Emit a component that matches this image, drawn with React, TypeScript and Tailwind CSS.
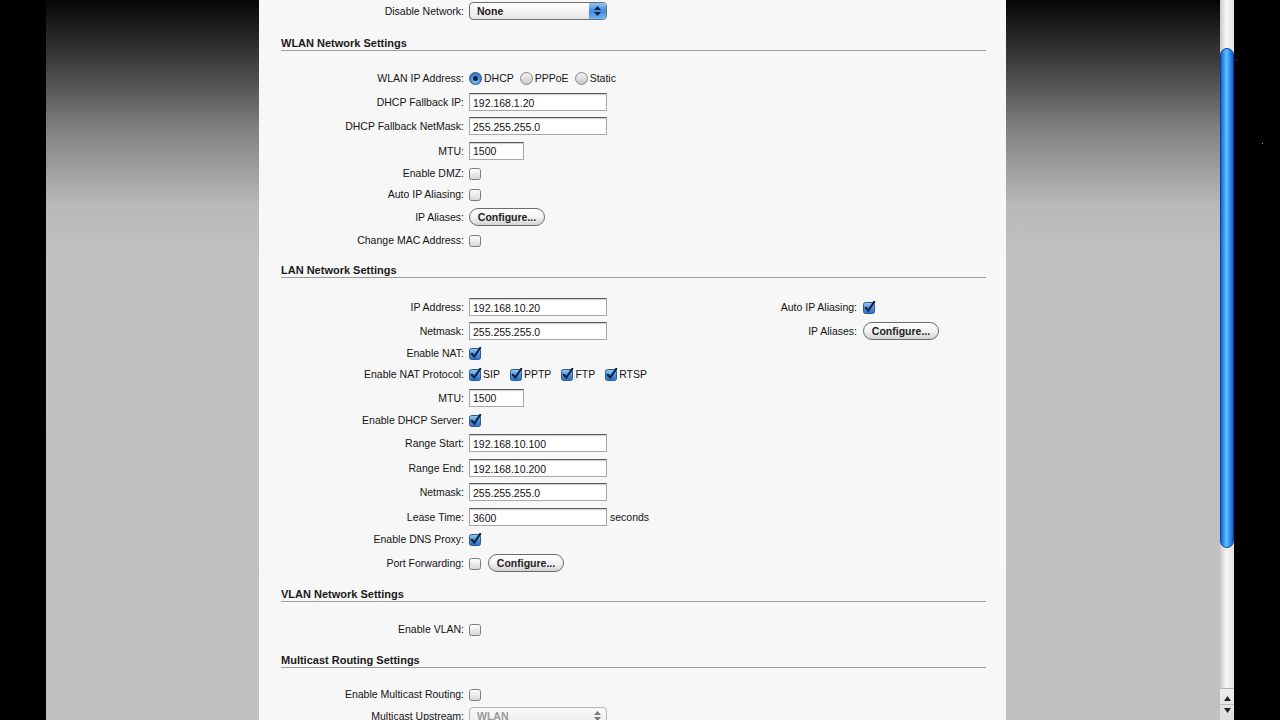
import type { ReactNode } from "react";

const FONT = "font-['Liberation_Sans',Arial,Helvetica,sans-serif]";

function Row({ h, label, children }: { h: string; label: string; children?: ReactNode }) {
  return (
    <div className={`flex items-center ${h}`}>
      <div className="w-[183px] shrink-0 pt-[2px] text-right text-[10.5px] text-[#141414]">{label}</div>
      <div className="ml-[5px] flex items-center">{children}</div>
    </div>
  );
}

function Heading({ pt, children }: { pt: string; children: string }) {
  return (
    <div className={`${pt} border-b border-[#9c9c9c] text-[11px] font-bold leading-[14px] text-[#1a1a1a]`}>
      {children}
    </div>
  );
}

function TextBox({ value, w = "w-[138px]" }: { value: string; w?: string }) {
  return (
    <input
      readOnly
      value={value}
      className={`${w} h-[18px] border border-[#a8a8a8] border-t-[#5c5c5c] bg-white pl-[3px] pt-[1px] text-[10.5px] text-[#111] shadow-[inset_0_1px_1px_rgba(0,0,0,0.2)] outline-none`}
    />
  );
}

function Check({ on = false }: { on?: boolean }) {
  return (
    <svg width="13" height="13" viewBox="0 0 13 13" className="block shrink-0">
      <defs>
        <linearGradient id="cbOff" x1="0" y1="0" x2="0" y2="1">
          <stop offset="0" stopColor="#ffffff" />
          <stop offset="1" stopColor="#d6d6d6" />
        </linearGradient>
        <linearGradient id="cbOn" x1="0" y1="0" x2="0" y2="1">
          <stop offset="0" stopColor="#9ccaf5" />
          <stop offset="0.5" stopColor="#4f93db" />
          <stop offset="1" stopColor="#2f6fc4" />
        </linearGradient>
      </defs>
      <rect
        x="0.5"
        y="1.5"
        width="11"
        height="11"
        rx="2"
        fill={on ? "url(#cbOn)" : "url(#cbOff)"}
        stroke={on ? "#2b5a96" : "#7c7c7c"}
      />
      {on && <path d="M2.8 6.8 L5.3 9.6 L11.2 0.8" fill="none" stroke="#0e2443" strokeWidth="2.1" strokeLinecap="round" />}
    </svg>
  );
}

function Radio({ on = false }: { on?: boolean }) {
  return on ? (
    <span className="flex h-[13px] w-[13px] shrink-0 items-center justify-center rounded-full border border-[#234f8c] bg-[radial-gradient(circle_at_50%_70%,#8fd0ff,#3d86d8_60%,#2860b0)]">
      <span className="block h-[5px] w-[5px] rounded-full bg-[#0f2340]" />
    </span>
  ) : (
    <span className="block h-[13px] w-[13px] shrink-0 rounded-full border border-[#858585] bg-gradient-to-b from-[#f4f4f4] to-[#c8c8c8]" />
  );
}

function Configure() {
  return (
    <button className="flex h-[18px] w-[76px] items-center justify-center rounded-full border border-[#6c6c6c] bg-gradient-to-b from-white via-[#f2f2f2] to-[#d4d4d4] pt-[1px] text-[10.5px] font-bold text-[#222]">
      Configure...
    </button>
  );
}

function Stepper({ blue }: { blue: boolean }) {
  return (
    <span
      className={`flex h-full w-[17px] flex-col items-center justify-center gap-[2px] rounded-r-[4px] ${
        blue ? "bg-gradient-to-b from-[#8ec6f6] via-[#3e8be0] to-[#6fb6f5]" : ""
      }`}
    >
      <svg width="7" height="4" viewBox="0 0 7 4">
        <path d="M0 4 L3.5 0 L7 4 Z" fill={blue ? "#0f2340" : "#7a7a7a"} />
      </svg>
      <svg width="7" height="4" viewBox="0 0 7 4">
        <path d="M0 0 L3.5 4 L7 0 Z" fill={blue ? "#0f2340" : "#7a7a7a"} />
      </svg>
    </span>
  );
}

function Select({ value, active }: { value: string; active: boolean }) {
  return (
    <div
      className={`flex h-[18px] w-[138px] items-center justify-between rounded-[4px] border ${
        active ? "border-[#6f6f6f] bg-gradient-to-b from-white to-[#e6e6e6]" : "border-[#b5b5b5] bg-gradient-to-b from-[#fafafa] to-[#ececec]"
      }`}
    >
      <span className={`pl-[7px] pt-[1px] text-[10.5px] font-bold ${active ? "text-[#1a1a1a]" : "text-[#9a9a9a]"}`}>{value}</span>
      <Stepper blue={active} />
    </div>
  );
}

function Scrollbar() {
  return (
    <div className="flex h-full w-[14px] shrink-0 flex-col bg-[linear-gradient(to_right,#c9c9c9,#f6f6f6_45%,#e2e2e2)]">
      <div className="h-[48px]" />
      <div className="h-[500px] rounded-full border border-[#0c3f96] bg-[linear-gradient(to_right,#1f5fd0,#59c4ff_45%,#2d8ef0_75%,#1957c2)]" />
      <div className="flex-1" />
      <div className="flex h-[32px] flex-col items-center justify-center gap-[3px] border-t border-[#b0b0b0] bg-gradient-to-b from-[#eeeeee] to-[#dcdcdc]">
        <svg width="7" height="5" viewBox="0 0 7 5">
          <path d="M0 5 L3.5 0 L7 5 Z" fill="#222" />
        </svg>
        <div className="h-px w-full bg-[#bdbdbd]" />
        <svg width="7" height="5" viewBox="0 0 7 5">
          <path d="M0 0 L3.5 5 L7 0 Z" fill="#222" />
        </svg>
      </div>
    </div>
  );
}

export default function App() {
  return (
    <div className={`flex h-[720px] w-[1280px] overflow-hidden bg-black ${FONT}`}>
      <div className="w-[46px] shrink-0 bg-black" />

      <div className="flex flex-1 bg-[linear-gradient(to_bottom,#050505_0px,#3c3c3c_60px,#818181_130px,#b9b9b9_205px,#c1c1c1_260px,#c0c0c0_100%)]">
        <div className="w-[213px] shrink-0" />

        {/* Settings form */}
        <main className="w-[747px] shrink-0 bg-[#f7f7f7] pl-[22px] pr-[20px] pt-[2px]">
          <Row h="h-[18px]" label="Disable Network:">
            <Select value="None" active />
          </Row>

          <Heading pt="pt-[16px]">WLAN Network Settings</Heading>
          <div className="h-[15px]" />
          <Row h="h-[24px]" label="WLAN IP Address:">
            <div className="flex items-center text-[10.5px] text-[#141414]">
              <Radio on />
              <span className="ml-[2px] pt-[2px]">DHCP</span>
              <span className="ml-[6px]"><Radio /></span>
              <span className="ml-[2px] pt-[2px]">PPPoE</span>
              <span className="ml-[6px]"><Radio /></span>
              <span className="ml-[2px] pt-[2px]">Static</span>
            </div>
          </Row>
          <Row h="h-[24px]" label="DHCP Fallback IP:">
            <TextBox value="192.168.1.20" />
          </Row>
          <Row h="h-[24px]" label="DHCP Fallback NetMask:">
            <TextBox value="255.255.255.0" />
          </Row>
          <Row h="h-[25px]" label="MTU:">
            <TextBox value="1500" w="w-[55px]" />
          </Row>
          <Row h="h-[20px]" label="Enable DMZ:">
            <Check />
          </Row>
          <Row h="h-[22px]" label="Auto IP Aliasing:">
            <Check />
          </Row>
          <Row h="h-[24px]" label="IP Aliases:">
            <Configure />
          </Row>
          <Row h="h-[22px]" label="Change MAC Address:">
            <Check />
          </Row>

          <Heading pt="pt-[12px]">LAN Network Settings</Heading>
          <div className="h-[17px]" />
          <div className="flex h-[24px] items-center">
            <Row h="h-[24px]" label="IP Address:">
              <TextBox value="192.168.10.20" />
            </Row>
            <div className="w-[250px] pt-[2px] text-right text-[10.5px] text-[#141414]">Auto IP Aliasing:</div>
            <div className="ml-[6px]">
              <Check on />
            </div>
          </div>
          <div className="flex h-[24px] items-center">
            <Row h="h-[24px]" label="Netmask:">
              <TextBox value="255.255.255.0" />
            </Row>
            <div className="w-[250px] pt-[2px] text-right text-[10.5px] text-[#141414]">IP Aliases:</div>
            <div className="ml-[6px]">
              <Configure />
            </div>
          </div>
          <Row h="h-[20px]" label="Enable NAT:">
            <Check on />
          </Row>
          <Row h="h-[22px]" label="Enable NAT Protocol:">
            <div className="flex items-center text-[10.5px] text-[#141414]">
              {["SIP", "PPTP", "FTP", "RTSP"].map((p) => (
                <span key={p} className="mr-[10px] flex items-center">
                  <Check on />
                  <span className="ml-[1px] pt-[2px]">{p}</span>
                </span>
              ))}
            </div>
          </Row>
          <Row h="h-[25px]" label="MTU:">
            <TextBox value="1500" w="w-[55px]" />
          </Row>
          <Row h="h-[20px]" label="Enable DHCP Server:">
            <Check on />
          </Row>
          <Row h="h-[26px]" label="Range Start:">
            <TextBox value="192.168.10.100" />
          </Row>
          <Row h="h-[24px]" label="Range End:">
            <TextBox value="192.168.10.200" />
          </Row>
          <Row h="h-[24px]" label="Netmask:">
            <TextBox value="255.255.255.0" />
          </Row>
          <Row h="h-[26px]" label="Lease Time:">
            <TextBox value="3600" />
            <span className="ml-[3px] pt-[2px] text-[10.5px] text-[#141414]">seconds</span>
          </Row>
          <Row h="h-[18px]" label="Enable DNS Proxy:">
            <Check on />
          </Row>
          <Row h="h-[30px]" label="Port Forwarding:">
            <Check />
            <span className="ml-[6px]">
              <Configure />
            </span>
          </Row>

          <Heading pt="pt-[9px]">VLAN Network Settings</Heading>
          <div className="h-[15px]" />
          <Row h="h-[24px]" label="Enable VLAN:">
            <Check />
          </Row>

          <Heading pt="pt-[12px]">Multicast Routing Settings</Heading>
          <div className="h-[15px]" />
          <Row h="h-[22px]" label="Enable Multicast Routing:">
            <Check />
          </Row>
          <Row h="h-[22px]" label="Multicast Upstream:">
            <Select value="WLAN" active={false} />
          </Row>
        </main>

        <div className="flex-1" />
      </div>

      <Scrollbar />
      <div className="relative w-[46px] shrink-0 bg-black">
        <span className="absolute left-[28px] top-[143px] h-px w-px bg-[#9a9a9a]" />
        <span className="absolute left-[2px] top-[60px] h-px w-px bg-[#555]" />
      </div>
    </div>
  );
}
